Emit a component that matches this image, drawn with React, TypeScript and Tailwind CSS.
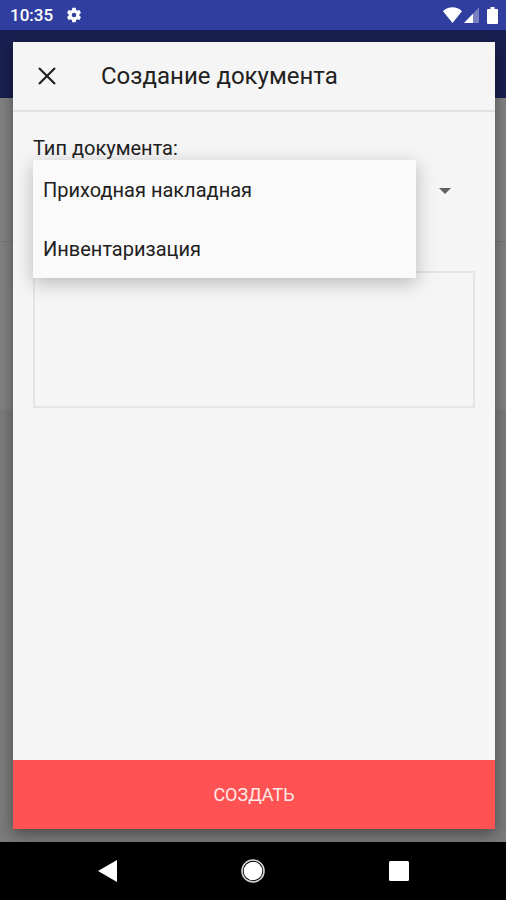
import { useState } from "react";

const documentTypes = ["Приходная накладная", "Инвентаризация"];

function StatusBar() {
  return (
    <header className="flex h-[30px] items-center justify-between bg-[#303f9f] pr-2 pl-2.5 text-white">
      <div className="flex items-center gap-3">
        <span className="text-[17px] leading-5 font-medium">10:35</span>
        <svg className="h-[18px] w-[18px]" viewBox="0 0 24 24" fill="currentColor">
          <path d="M19.14 12.94c.04-.3.06-.61.06-.94 0-.32-.02-.64-.07-.94l2.03-1.58c.18-.14.23-.41.12-.61l-1.92-3.32c-.12-.22-.37-.29-.59-.22l-2.39.96c-.5-.38-1.03-.7-1.62-.94l-.36-2.54c-.04-.24-.24-.41-.48-.41h-3.84c-.24 0-.43.17-.47.41l-.36 2.54c-.59.24-1.13.57-1.62.94l-2.39-.96c-.22-.08-.47 0-.59.22L2.74 8.87c-.12.21-.08.47.12.61l2.03 1.58c-.05.3-.09.63-.09.94s.02.64.07.94l-2.03 1.58c-.18.14-.23.41-.12.61l1.92 3.32c.12.22.37.29.59.22l2.39-.96c.5.38 1.03.7 1.62.94l.36 2.54c.05.24.24.41.48.41h3.84c.24 0 .44-.17.47-.41l.36-2.54c.59-.24 1.13-.56 1.62-.94l2.39.96c.22.08.47 0 .59-.22l1.92-3.32c.12-.22.07-.47-.12-.61l-2.01-1.58zM12 15a3 3 0 1 1 0-6 3 3 0 0 1 0 6z" />
        </svg>
      </div>
      <div className="flex items-center">
        <svg className="h-4 w-[19px]" viewBox="0 0 19 16" fill="currentColor">
          <path d="M9.500 16 0 4.200C2.500 1.600 5.800.2 9.500.2s7 1.400 9.500 4z" />
        </svg>
        <svg className="ml-0.5 h-4 w-[15px]" viewBox="0 0 15 16" fill="currentColor">
          <path d="M15 .5V16H0z" opacity="0.35" />
          <path d="M9 6.700V16H0z" />
        </svg>
        <svg className="ml-2 h-[17px] w-[11px]" viewBox="0 0 11 17" fill="currentColor">
          <path d="M3.500 0h4v2H10q1 0 1 1v13q0 1-1 1H1q-1 0-1-1V3q0-1 1-1h2.500z" />
        </svg>
      </div>
    </header>
  );
}

function SystemNav() {
  return (
    <nav className="grid h-[58px] grid-cols-[1fr_78px_1fr] items-center bg-black text-white">
      <button aria-label="Назад" className="mr-[97px] justify-self-end">
        <svg className="h-[22px] w-[19px]" viewBox="0 0 19 22" fill="currentColor">
          <path d="M19 0v22L0 11z" />
        </svg>
      </button>
      <button aria-label="Домой" className="justify-self-center">
        <svg className="h-6 w-6" viewBox="0 0 24 24">
          <circle cx="12" cy="12" r="11" fill="none" stroke="#d6d6d6" strokeWidth="1.600" />
          <circle cx="12" cy="12" r="9.300" fill="currentColor" />
        </svg>
      </button>
      <button aria-label="Недавние" className="ml-[97px] justify-self-start">
        <svg className="h-5 w-5" viewBox="0 0 20 20" fill="currentColor">
          <rect width="20" height="20" rx="1.500" />
        </svg>
      </button>
    </nav>
  );
}

export default function App() {
  const [type, setType] = useState(0);
  const [open, setOpen] = useState(true);
  const [comment, setComment] = useState("");

  const handleSelect = (index: number) => {
    setType(index);
    setOpen(false);
  };

  return (
    <div className="flex min-h-screen flex-col font-['Roboto',sans-serif] text-[#212121]">
      <StatusBar />
      <main className="relative flex flex-1 flex-col px-[13px] pt-3 pb-[13px]">
        {/* dimmed screen behind the dialog */}
        <div className="absolute inset-0 flex flex-col bg-[#7b7b7b]">
          <div className="h-[68px] bg-[#191f50]" />
          <div className="h-36 border-b border-[#777777] bg-[#818181]" />
          <div className="h-[168px] bg-[#818181]" />
        </div>

        <div role="dialog" aria-labelledby="title" className="relative -mr-0.5 flex flex-1 flex-col bg-[#f5f5f5] shadow-[0_5px_14px_rgba(0,0,0,0.4)]">
          <div className="flex h-[70px] items-center border-b-2 border-[#e2e2e2] pl-[25px]">
            <button aria-label="Закрыть">
              <svg className="h-[18px] w-[18px]" viewBox="0 0 18 18" fill="none" stroke="currentColor" strokeWidth="2.200">
                <path d="M1 1l16 16M17 1L1 17" />
              </svg>
            </button>
            <h1 id="title" className="ml-[45px] text-2xl">Создание документа</h1>
          </div>

          <div className="flex flex-1 flex-col px-5 pt-6">
            <label htmlFor="type" className="text-xl leading-6">Тип документа:</label>
            <div className="relative">
              <select
                id="type"
                value={type}
                onChange={(e) => setType(Number(e.target.value))}
                className="h-[60px] w-full appearance-none bg-transparent px-2.5 text-xl"
              >
                {documentTypes.map((name, index) => (
                  <option key={name} value={index}>{name}</option>
                ))}
              </select>
              <svg className="pointer-events-none absolute top-7 right-6 h-1.5 w-3" viewBox="0 0 12 6" fill="#616161">
                <path d="M0 0h12L6 6z" />
              </svg>
              {open && (
                <ul className="absolute top-0 right-[59px] left-0 bg-[#fafafa] shadow-[0_5px_18px_rgba(0,0,0,0.25)]">
                  {documentTypes.map((name, index) => (
                    <li key={name}>
                      <button className="h-[59px] w-full px-2.5 text-left text-xl" onClick={() => handleSelect(index)}>{name}</button>
                    </li>
                  ))}
                </ul>
              )}
            </div>
            <textarea
              aria-label="Комментарий"
              value={comment}
              onChange={(e) => setComment(e.target.value)}
              className="mt-[51px] h-[137px] w-full resize-none border-2 border-[#e5e5e5] bg-transparent p-2"
            />
          </div>

          <button className="h-[69px] bg-[#ff5252] text-lg text-[#ffe9e9]">СОЗДАТЬ</button>
        </div>
      </main>
      <SystemNav />
    </div>
  );
}
